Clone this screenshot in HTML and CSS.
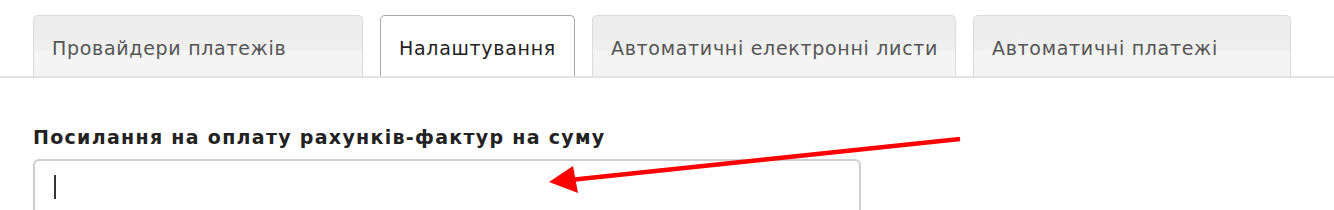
FILE: index.html
```html
<!DOCTYPE html>
<html lang="uk">
<head>
    <meta charset="UTF-8">
    <meta name="viewport" content="width=device-width, initial-scale=1.0">
    <title>Налаштування платежів</title>
    <link rel="stylesheet" href="styles.css">
</head>
<body>
    <div class="tabs">
        <div class="tab tab-providers">Провайдери платежів</div>
        <div class="tab tab-settings active">Налаштування</div>
        <div class="tab tab-emails">Автоматичні електронні листи</div>
        <div class="tab tab-payments">Автоматичні платежі</div>
    </div>

    <div class="settings">
        <label class="field-label" for="invoiceLink">Посилання на оплату рахунків-фактур на суму</label>
        <div class="field" id="invoiceLink"><span class="caret"></span></div>
    </div>

    <!-- annotation arrow -->
    <svg class="annotation" width="1334" height="210" viewBox="0 0 1334 210">
        <line x1="960" y1="139" x2="570" y2="180" stroke="#ff0000" stroke-width="4.5" stroke-linecap="butt"/>
        <polygon points="549,182 573,166 578,193" fill="#ff0000"/>
    </svg>
</body>
</html>
```

FILE: styles.css
```css
body {
    margin: 0;
    font-family: "DejaVu Sans", Verdana, sans-serif;
    background: #fff;
    color: #222;
    position: relative;
    overflow: hidden;
    height: 210px;
}
.tabs {
    display: flex;
    gap: 17px;
    padding: 15px 0 0 33px;
    border-bottom: 2px solid #e2e2e2;
    height: 61px;
}
.tab {
    box-sizing: border-box;
    height: 61px;
    padding: 21px 18px 0;
    font-size: 19px;
    letter-spacing: 0.7px;
    line-height: 22px;
    color: #555;
    white-space: nowrap;
    overflow: hidden;
    border: 1px solid #dcdcdc;
    border-bottom: none;
    border-radius: 5px 5px 0 0;
    background: linear-gradient(#ececec 0%, #efefef 55%, #f5f5f5 62%, #f3f3f3 100%);
}
.tab-providers {
    width: 330px;
}
.tab-settings {
    width: 195px;
}
.tab-emails {
    width: 364px;
}
.tab-payments {
    width: 318px;
}
.tab.active {
    background: #fff;
    color: #222;
    border: 1px solid #a8a8a8;
    border-bottom: none;
}
.settings {
    padding: 48px 0 0 33px;
}
.field-label {
    display: block;
    font-size: 19px;
    font-weight: bold;
    letter-spacing: 1.3px;
    line-height: 22px;
    color: #222;
    margin-bottom: 11px;
}
.field {
    box-sizing: border-box;
    width: 828px;
    height: 60px;
    border: 2px solid #cfcfcf;
    border-radius: 6px;
    padding: 14px 0 0 19px;
}
.caret {
    display: block;
    width: 2px;
    height: 24px;
    background: #333;
}
.annotation {
    position: absolute;
    left: 0;
    top: 0;
    pointer-events: none;
}
```
